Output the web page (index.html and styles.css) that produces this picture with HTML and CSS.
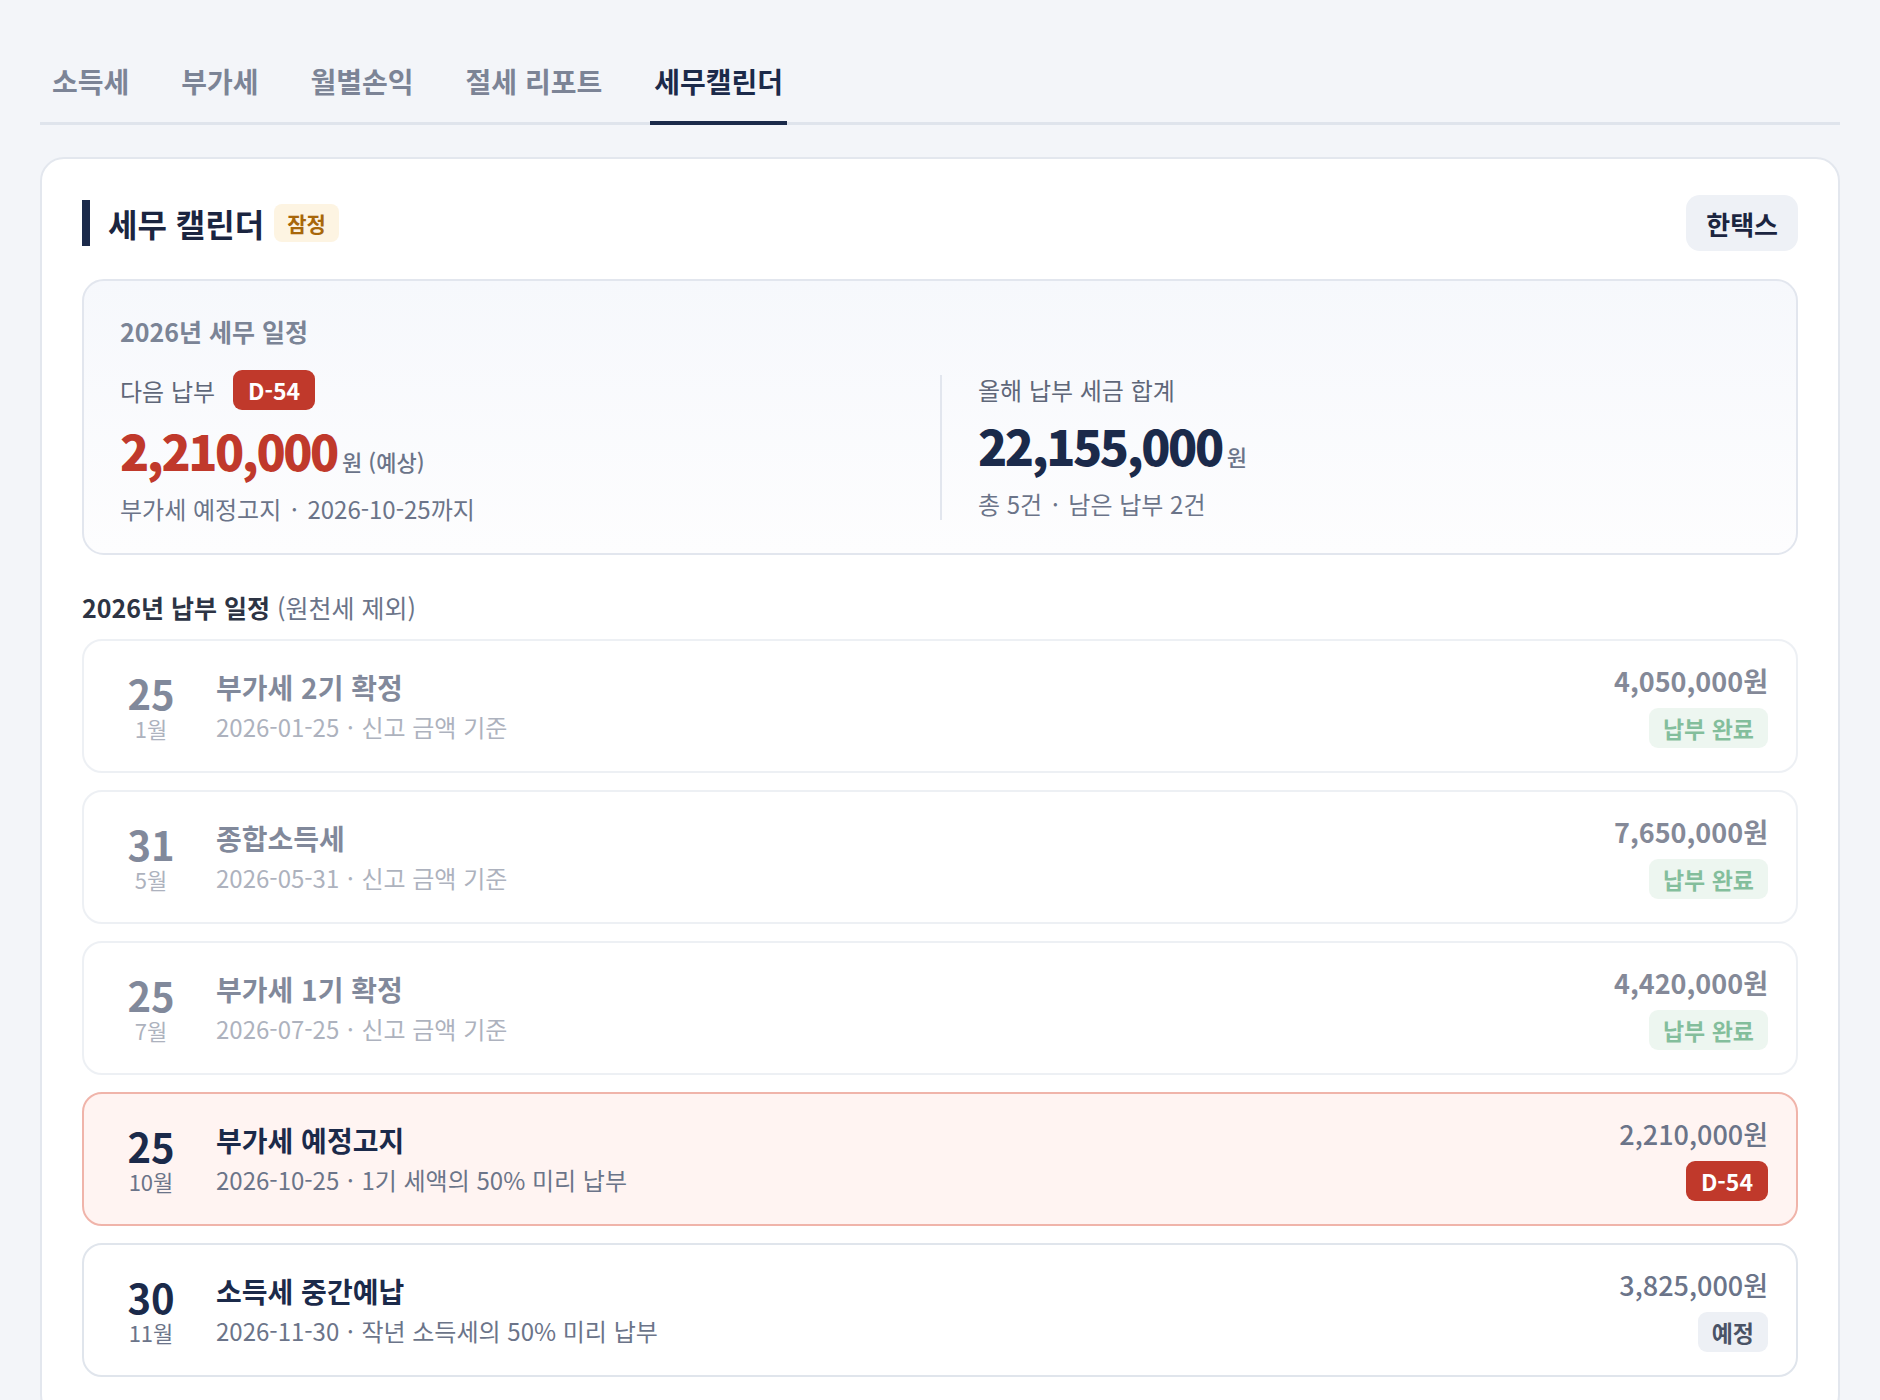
FILE: index.html
```html
<!DOCTYPE html>
<html lang="ko">
<head>
  <meta charset="UTF-8">
  <meta name="viewport" content="width=device-width, initial-scale=1.0">
  <title>세무캘린더</title>
  <link rel="stylesheet" href="styles.css">
</head>
<body>
  <nav class="tabs">
    <div class="tab">소득세</div>
    <div class="tab">부가세</div>
    <div class="tab">월별손익</div>
    <div class="tab">절세 리포트</div>
    <div class="tab active">세무캘린더</div>
  </nav>

  <section class="card">
    <div class="card-head">
      <div class="title-group">
        <h2 class="card-title">세무 캘린더</h2>
        <span class="tag-draft">잠정</span>
      </div>
      <button class="btn-hometax">한택스</button>
    </div>

    <div class="summary">
      <div class="summary-title">2026년 세무 일정</div>
      <div class="summary-grid">
        <div class="summary-col">
          <div class="next-label">다음 납부 <span class="badge badge-dday">D-54</span></div>
          <div class="big-amount red">2,210,000<span class="unit">원 (예상)</span></div>
          <div class="summary-sub">부가세 예정고지 <span class="dot">·</span> 2026-10-25까지</div>
        </div>
        <div class="summary-col">
          <div class="col-label">올해 납부 세금 합계</div>
          <div class="big-amount">22,155,000<span class="unit">원</span></div>
          <div class="summary-sub">총 5건 <span class="dot">·</span> 남은 납부 2건</div>
        </div>
      </div>
    </div>

    <div class="list-title">2026년 납부 일정 <span>(원천세 제외)</span></div>

    <div class="list">
      <div class="row done">
        <div class="date"><div class="day">25</div><div class="month">1월</div></div>
        <div class="info">
          <div class="info-title">부가세 2기 확정</div>
          <div class="info-sub">2026-01-25 <span class="dot">·</span> 신고 금액 기준</div>
        </div>
        <div class="side">
          <div class="amount">4,050,000원</div>
          <span class="badge badge-paid">납부 완료</span>
        </div>
      </div>

      <div class="row done">
        <div class="date"><div class="day">31</div><div class="month">5월</div></div>
        <div class="info">
          <div class="info-title">종합소득세</div>
          <div class="info-sub">2026-05-31 <span class="dot">·</span> 신고 금액 기준</div>
        </div>
        <div class="side">
          <div class="amount">7,650,000원</div>
          <span class="badge badge-paid">납부 완료</span>
        </div>
      </div>

      <div class="row done">
        <div class="date"><div class="day">25</div><div class="month">7월</div></div>
        <div class="info">
          <div class="info-title">부가세 1기 확정</div>
          <div class="info-sub">2026-07-25 <span class="dot">·</span> 신고 금액 기준</div>
        </div>
        <div class="side">
          <div class="amount">4,420,000원</div>
          <span class="badge badge-paid">납부 완료</span>
        </div>
      </div>

      <div class="row next">
        <div class="date"><div class="day">25</div><div class="month">10월</div></div>
        <div class="info">
          <div class="info-title">부가세 예정고지</div>
          <div class="info-sub">2026-10-25 <span class="dot">·</span> 1기 세액의 50% 미리 납부</div>
        </div>
        <div class="side">
          <div class="amount">2,210,000원</div>
          <span class="badge badge-dday">D-54</span>
        </div>
      </div>

      <div class="row">
        <div class="date"><div class="day">30</div><div class="month">11월</div></div>
        <div class="info">
          <div class="info-title">소득세 중간예납</div>
          <div class="info-sub">2026-11-30 <span class="dot">·</span> 작년 소득세의 50% 미리 납부</div>
        </div>
        <div class="side">
          <div class="amount">3,825,000원</div>
          <span class="badge badge-plan">예정</span>
        </div>
      </div>
    </div>
  </section>
</body>
</html>
```

FILE: styles.css
```css
body { margin: 0; padding: 40px 40px 0; background: #f3f5f9; font-family: "Noto Sans CJK KR", "Noto Sans", sans-serif; color: #1b2a4a; }

.tabs { display: flex; gap: 44px; padding-left: 8px; border-bottom: 3px solid #dfe4ec; }
.tab { padding: 23px 4px 22px; font-size: 28px; line-height: 36px; font-weight: 700; color: #7c8496; border-bottom: 4px solid transparent; margin-bottom: -3px; }
.tab.active { color: #1b2a4a; border-bottom-color: #1b2a4a; }

.card { margin-top: 32px; background: #fff; border: 2px solid #e3e7ee; border-radius: 24px; padding: 36px 40px 40px; }
.card-head { display: flex; justify-content: space-between; align-items: center; height: 56px; }
.title-group { display: flex; align-items: center; gap: 10px; }
.card-title { margin: 0; font-size: 32px; line-height: 46px; font-weight: 700; border-left: 8px solid #1b2a4a; padding-left: 18px; color: #1b2540; }
.tag-draft { background: #fdf4e2; color: #a8670a; font-size: 21px; font-weight: 700; line-height: 38px; padding: 0 13px; border-radius: 8px; }
.btn-hometax { height: 56px; padding: 0 20px; border: none; border-radius: 14px; background: #eef1f6; color: #1b2540; font-family: inherit; font-size: 26px; font-weight: 700; }

.summary { margin-top: 28px; border: 2px solid #e2e6ee; border-radius: 22px; background: linear-gradient(#f6f8fc, #fdfdfe); padding: 34px 36px 28px; }
.summary-title { font-size: 25px; line-height: 32px; font-weight: 700; color: #7b8496; margin-bottom: 23px; }
.summary-grid { display: grid; grid-template-columns: 1fr 1fr; align-items: center; }
.summary-col + .summary-col { border-left: 2px solid #e2e6ee; padding-left: 36px; }
.next-label { display: flex; align-items: center; gap: 18px; font-size: 24px; color: #5f6779; height: 40px; }
.col-label { font-size: 24px; line-height: 30px; color: #5f6779; }
.big-amount { margin-top: 12px; font-size: 48px; line-height: 56px; font-weight: 800; color: #1b2a4a; letter-spacing: -2.4px; }
.big-amount.red { color: #c0392b; }
.unit { margin-left: 5px; font-size: 22px; font-weight: 500; color: #6b7489; letter-spacing: 0; }
.summary-sub { margin-top: 4px; font-size: 24px; line-height: 32px; color: #6b7489; }
.dot { margin: 0 3px; }

.badge { display: inline-block; font-size: 23px; line-height: 40px; font-weight: 700; padding: 0 14px; border-radius: 9px; }
.badge-dday { background: #c0392b; color: #fff; padding: 0 15px; }
.badge-paid { background: #e0f0e5; color: #1e8a4c; }
.badge-plan { background: #edf0f5; color: #4a5366; }

.list-title { margin: 36px 0 16px; font-size: 25px; line-height: 32px; font-weight: 700; color: #2d3444; }
.list-title span { font-weight: 400; color: #6b7489; }

.list { display: flex; flex-direction: column; gap: 17px; }
.row { display: flex; align-items: center; padding: 23px 28px 23px 34px; border: 2px solid #e0e5ec; border-radius: 20px; background: #fff; }
.row.done { opacity: 0.55; }
.row.next { background: #fff4f2; border-color: #f0b4aa; }
.row .dot { margin: 0 1px; }
.date { width: 66px; text-align: center; }
.day { font-size: 40px; line-height: 42px; font-weight: 700; color: #1b2a4a; }
.month { margin-top: 2px; font-size: 22px; line-height: 24px; color: #6b7489; }
.info { flex: 1; margin-left: 32px; }
.info-title { font-size: 28px; line-height: 36px; font-weight: 700; color: #1b2a4a; }
.info-sub { margin-top: 6px; font-size: 24px; line-height: 32px; color: #6b7489; }
.side { display: flex; flex-direction: column; align-items: flex-end; gap: 10px; }
.amount { font-size: 27px; line-height: 34px; font-weight: 500; color: #6b7489; }
.row.done .amount { font-weight: 700; color: #212a45; }
```
